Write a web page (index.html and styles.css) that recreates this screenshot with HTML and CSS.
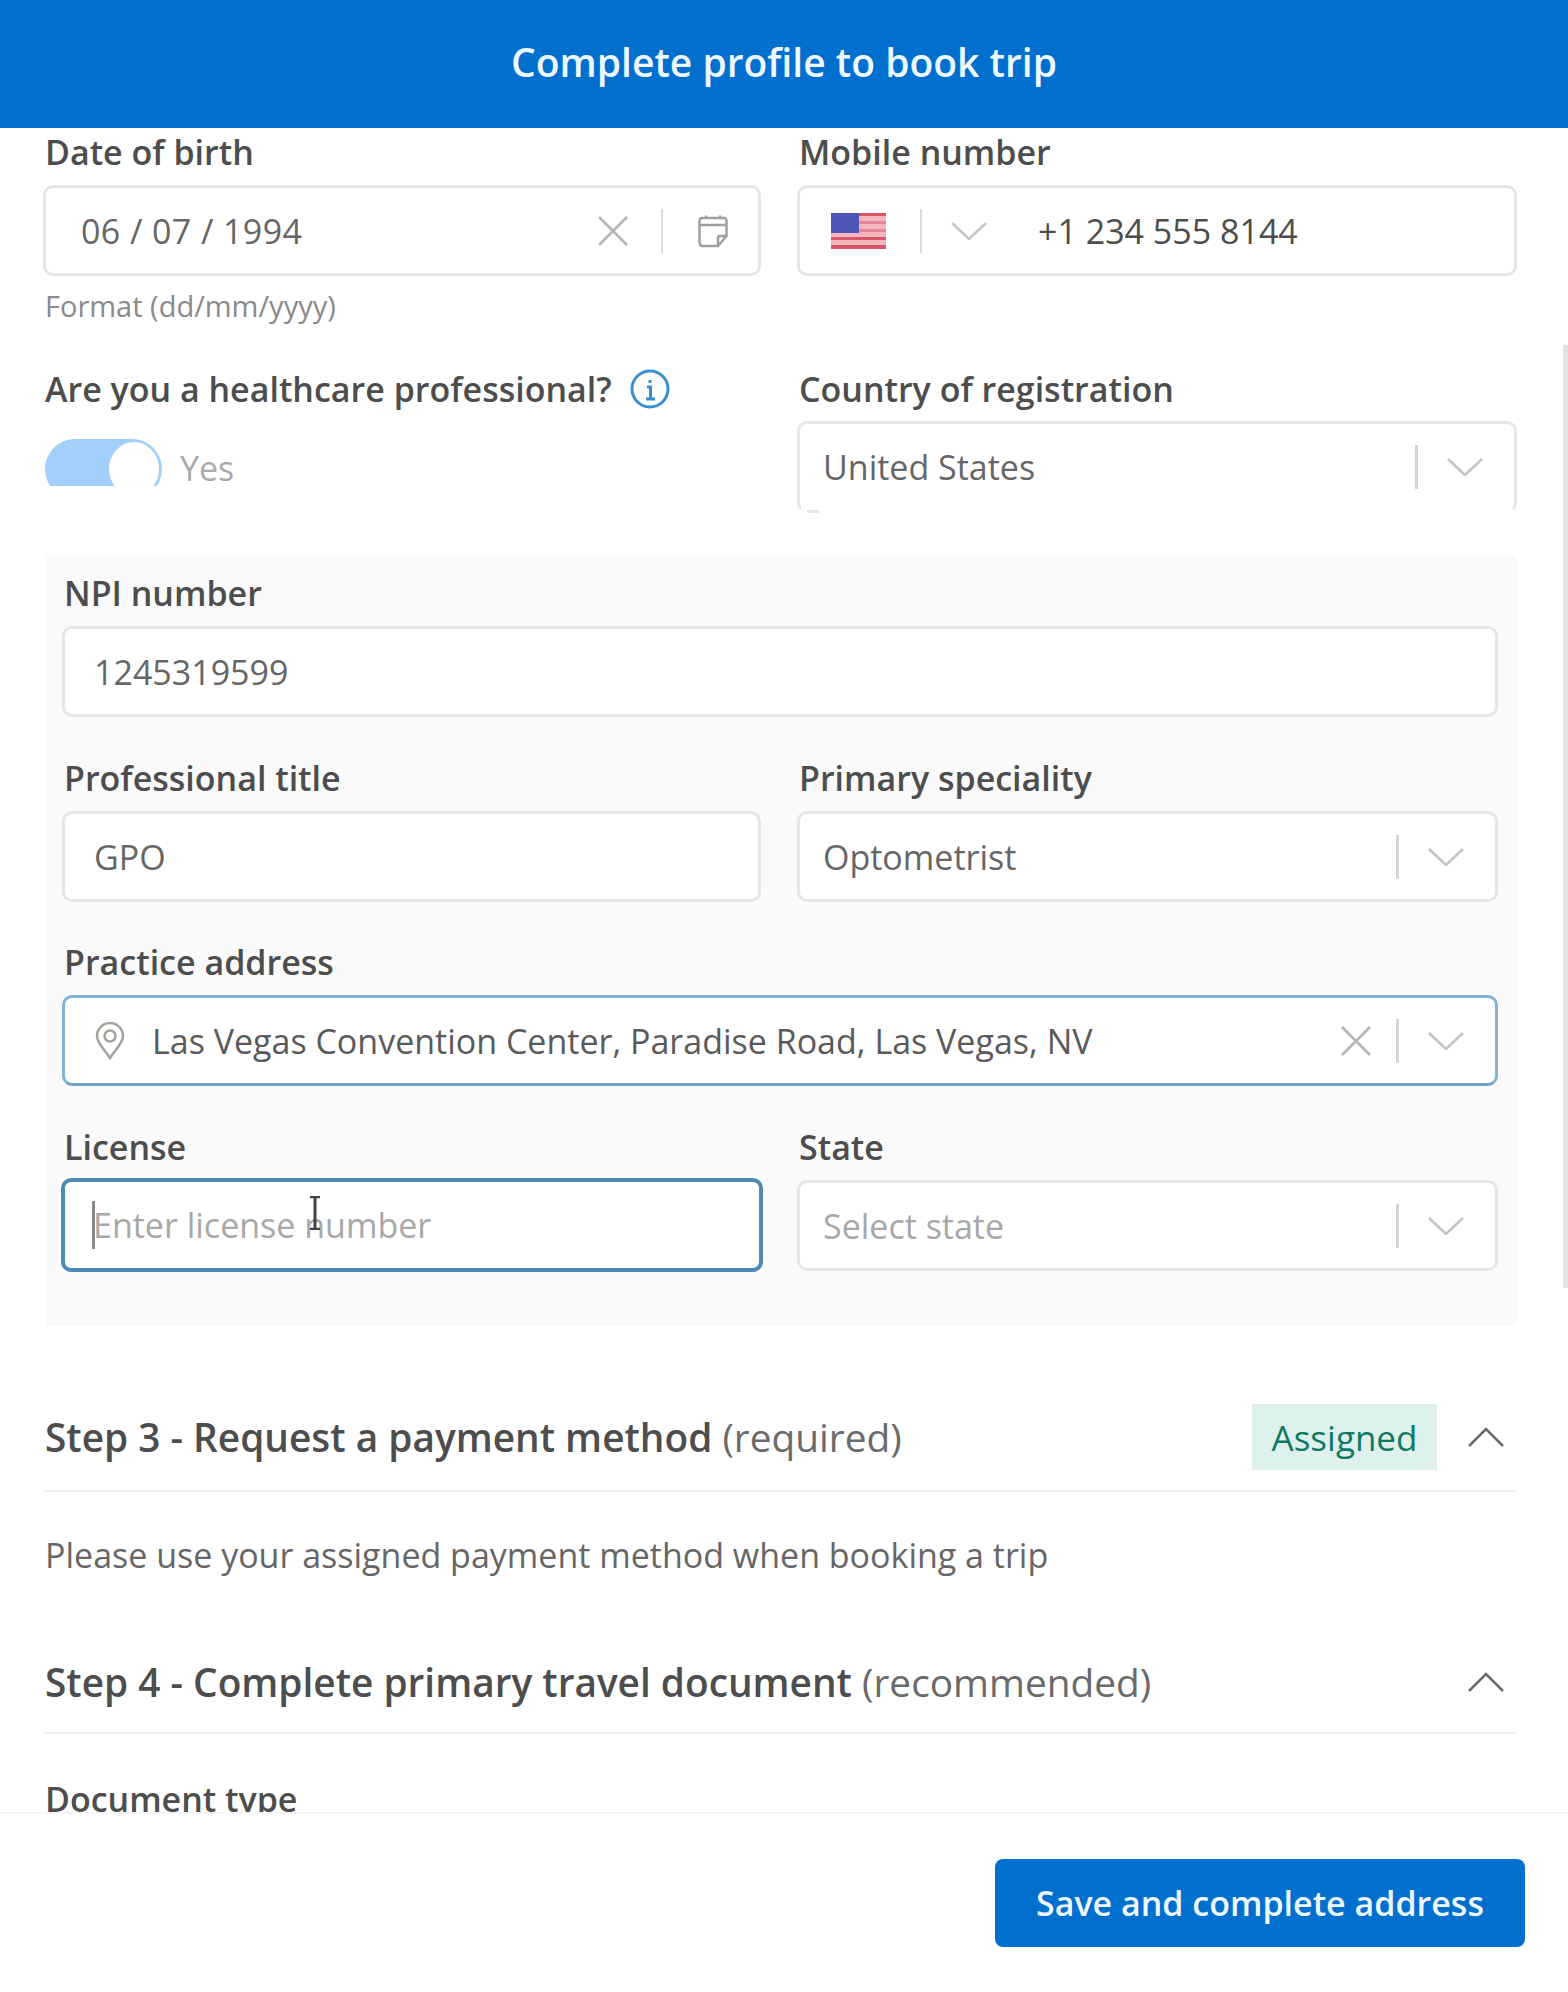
FILE: index.html
```html
<!DOCTYPE html>
<html lang="en">
<head>
  <meta charset="UTF-8" />
  <meta name="viewport" content="width=device-width, initial-scale=1.0"/>
  <title>Complete profile</title>
  <link rel="stylesheet" href="styles.css">
</head>
<body>
  <header class="top-bar">Complete profile to book trip</header>

  <main class="content">
    <div class="scrollbar"></div>

    <div class="row first-row">
      <div class="col">
        <div class="label">Date of birth</div>
        <div class="field">
          <span class="value date-value">06 / 07 / 1994</span>
          <svg class="icon-x" viewBox="0 0 32 32"><path d="M2 2 30 30M30 2 2 30"/></svg>
          <span class="divider"></span>
          <svg class="icon-cal" viewBox="0 0 30 34"><path d="M4 4H26Q28.500 4 28.500 7V22L20 32H5Q1.500 32 1.500 28V7Q1.500 4 4 4ZM1.500 11H28.500M8 1.500V5M22 1.500V5M28 22H22Q20 22 20 24V32"/></svg>
        </div>
        <div class="hint">Format (dd/mm/yyyy)</div>
      </div>
      <div class="col">
        <div class="label">Mobile number</div>
        <div class="field phone-field">
          <svg class="flag" viewBox="0 0 55 36">
            <rect width="55" height="36" fill="#f3b6bd"/>
            <rect y="0" width="55" height="3" fill="#d9566a"/>
            <rect y="8" width="55" height="3" fill="#e58795"/>
            <rect y="16" width="55" height="3" fill="#e58795"/>
            <rect y="24" width="55" height="3" fill="#d9566a"/>
            <rect y="32" width="55" height="4" fill="#d9566a"/>
            <rect width="28" height="20" fill="#4f56b5"/>
          </svg>
          <span class="divider"></span>
          <svg class="chev" viewBox="0 0 36 18"><path d="M1 1 18 17 35 1"/></svg>
          <span class="value phone-value">+1 234 555 8144</span>
        </div>
      </div>
    </div>

    <div class="row second-row">
      <div class="col">
        <div class="label with-info">Are you a healthcare professional?
          <svg class="icon-info" viewBox="0 0 40 40"><circle cx="20" cy="20" r="18"/><path d="M20 11V14M17 18H20.500V30M16 30H25"/></svg>
        </div>
        <div class="toggle-row">
          <div class="toggle"><span class="knob"></span></div>
          <span class="toggle-text">Yes</span>
        </div>
      </div>
      <div class="col">
        <div class="label">Country of registration</div>
        <div class="field select cut-field">
          <span class="value">United States</span>
          <span class="divider"></span>
          <svg class="chev" viewBox="0 0 36 18"><path d="M1 1 18 17 35 1"/></svg>
        </div>
      </div>
    </div>

    <section class="panel">
      <div class="label">NPI number</div>
      <div class="field npi-field"><span class="value">1245319599</span></div>

      <div class="panel-row">
        <div class="col">
          <div class="label">Professional title</div>
          <div class="field npi-field"><span class="value">GPO</span></div>
        </div>
        <div class="col">
          <div class="label">Primary speciality</div>
          <div class="field select">
            <span class="value">Optometrist</span>
            <span class="divider"></span>
            <svg class="chev" viewBox="0 0 36 18"><path d="M1 1 18 17 35 1"/></svg>
          </div>
        </div>
      </div>

      <div class="panel-block">
        <div class="label">Practice address</div>
        <div class="field select address-field">
          <svg class="icon-pin" viewBox="0 0 30 38"><path d="M15 36C9 27 2 21 2 14A13 13 0 0 1 28 14C28 21 21 27 15 36Z"/><circle cx="15" cy="14" r="5.500"/></svg>
          <span class="value">Las Vegas Convention Center, Paradise Road, Las Vegas, NV</span>
          <svg class="icon-x" viewBox="0 0 32 32"><path d="M2 2 30 30M30 2 2 30"/></svg>
          <span class="divider"></span>
          <svg class="chev" viewBox="0 0 36 18"><path d="M1 1 18 17 35 1"/></svg>
        </div>
      </div>

      <div class="panel-row">
        <div class="col">
          <div class="label">License</div>
          <div class="field license-field">
            <span class="caret"></span>
            <span class="placeholder">Enter license number</span>
            <svg class="ibeam" viewBox="0 0 12 38" preserveAspectRatio="none"><path d="M1 1H11M6 1V37M1 37H11"/></svg>
          </div>
        </div>
        <div class="col">
          <div class="label">State</div>
          <div class="field select">
            <span class="placeholder">Select state</span>
            <span class="divider"></span>
            <svg class="chev" viewBox="0 0 36 18"><path d="M1 1 18 17 35 1"/></svg>
          </div>
        </div>
      </div>
    </section>

    <div class="step-head step-three">
      <h2>Step 3 - Request a payment method <span>(required)</span></h2>
      <span class="badge">Assigned</span>
      <svg class="chev-up" viewBox="0 0 36 20"><path d="M1 19 18 2 35 19"/></svg>
    </div>
    <p class="step-text">Please use your assigned payment method when booking a trip</p>

    <div class="step-head step-four">
      <h2>Step 4 - Complete primary travel document <span>(recommended)</span></h2>
      <svg class="chev-up" viewBox="0 0 36 20"><path d="M1 19 18 2 35 19"/></svg>
    </div>
    <div class="label doc-label">Document type</div>
  </main>

  <footer class="bottom-bar">
    <button class="save-btn">Save and complete address</button>
  </footer>
</body>
</html>
```

FILE: styles.css
```css
* {
  margin: 0;
  padding: 0;
  box-sizing: border-box;
}

body {
  font-family: "Open Sans", "Noto Sans", sans-serif;
  background-color: #fff;
  color: #4a4a4a;
  width: 1568px;
  height: 1992px;
  overflow: hidden;
}

.top-bar {
  background-color: #006fcd;
  color: #eef8ff;
  height: 128px;
  display: flex;
  align-items: center;
  justify-content: center;
  font-size: 39px;
  font-weight: 600;
  padding-bottom: 5px;
}

.content {
  position: relative;
  height: 1684px;
  overflow: hidden;
  padding: 2px 51px 0 43px;
}

.scrollbar {
  position: absolute;
  right: 0;
  top: 217px;
  width: 5px;
  height: 943px;
  background-color: #e2e2e2;
}

.row {
  display: grid;
  grid-template-columns: 718px 720px;
  column-gap: 36px;
}

.first-row {
  height: 200px;
}

.second-row {
  margin-top: 37px;
  height: 144px;
}

.second-row .label {
  margin-bottom: 10px;
}

.label {
  font-size: 34px;
  font-weight: 600;
  line-height: 44px;
  color: #4d4d4d;
  margin-bottom: 11px;
  margin-left: 2px;
  white-space: nowrap;
}

.with-info {
  display: flex;
  align-items: center;
  gap: 18px;
}

.field {
  height: 91px;
  background-color: #fff;
  border: 3px solid #e6e6e6;
  border-radius: 10px;
  display: flex;
  align-items: center;
  position: relative;
}

.value {
  font-size: 34px;
  color: #666;
  white-space: nowrap;
  padding-left: 23px;
  flex: 1;
}

.date-value {
  padding-left: 35px;
  letter-spacing: 0.4px;
}

.phone-field {
  padding-left: 31px;
}

.phone-field .value {
  color: #4d4d4d;
  padding-left: 51px;
}

.phone-field .chev {
  margin-left: 29px;
  margin-right: 0;
}

.npi-field .value {
  padding-left: 29px;
}

.flag {
  width: 55px;
  height: 36px;
  margin-right: 34px;
}

.divider {
  width: 2px;
  height: 44px;
  background-color: #dcdcdc;
  flex-shrink: 0;
}

.select .divider {
  width: 3px;
  margin-left: -1px;
  background-color: #d4d4d4;
}

.icon-x {
  width: 32px;
  height: 32px;
  margin-right: 32px;
  flex-shrink: 0;
}

.icon-x path {
  fill: none;
  stroke: #b5b5b5;
  stroke-width: 2.500;
}

.icon-cal {
  width: 30px;
  height: 34px;
  margin: 0 30px 0 35px;
  flex-shrink: 0;
}

.icon-cal path {
  fill: none;
  stroke: #a0a0a0;
  stroke-width: 2.500;
}

.chev {
  width: 36px;
  height: 18px;
  margin: 0 31px 0 29px;
  flex-shrink: 0;
}

.chev path,
.chev-up path {
  fill: none;
  stroke-width: 2.500;
}

.chev path {
  stroke: #c4c4c4;
}

.chev-up path {
  stroke: #6a6a6a;
}

.hint {
  font-size: 29px;
  line-height: 36px;
  color: #8a8a8a;
  margin: 12px 0 0 2px;
  white-space: nowrap;
}

.icon-info {
  width: 40px;
  height: 40px;
}

.icon-info circle,
.icon-info path {
  fill: none;
  stroke: #3a8fd0;
  stroke-width: 3;
}

.toggle-row {
  display: flex;
  align-items: flex-start;
  gap: 18px;
  margin-top: 28px;
  margin-left: 2px;
}

.toggle {
  width: 117px;
  height: 47px;
  overflow: hidden;
  position: relative;
}

.toggle::before {
  content: "";
  display: block;
  width: 117px;
  height: 60px;
  border-radius: 30px;
  background-color: #a3d0fb;
}

.knob {
  position: absolute;
  left: 64px;
  top: 3px;
  width: 50px;
  height: 54px;
  border-radius: 50%;
  background-color: #fff;
}

.toggle-text {
  font-size: 34px;
  color: #aaa;
  line-height: 44px;
  margin-top: 7px;
}

.cut-field {
  height: 92px;
  border-bottom-color: transparent;
}

.cut-field::after {
  content: "";
  position: absolute;
  left: 7px;
  bottom: -3px;
  width: 12px;
  height: 3px;
  background-color: #e6e6e6;
}

.panel {
  background-color: #fafafa;
  margin: 44px 0 0 3px;
  padding: 16px 19px 55px 16px;
}

.panel-row {
  display: grid;
  grid-template-columns: 699px 701px;
  column-gap: 36px;
  margin-top: 39px;
}

.panel-block {
  margin-top: 38px;
}

.panel .label {
  margin-left: 2px;
}

.address-field {
  border: 3px solid #7fb4d6;
  border-bottom-color: #6fa3c6;
}

.address-field .icon-x {
  margin-right: 25px;
}

.icon-pin {
  width: 30px;
  height: 38px;
  margin-left: 30px;
  flex-shrink: 0;
}

.icon-pin path,
.icon-pin circle {
  fill: none;
  stroke: #a6a29c;
  stroke-width: 2.500;
}

.address-field .value {
  padding-left: 27px;
  color: #5a5a5a;
}

.license-field {
  border: 4px solid #4d8ab5;
  height: 94px;
  margin: -2px -2px -1px -1px;
}

.caret {
  width: 3px;
  height: 48px;
  background-color: #888;
  margin-left: 27px;
}

.placeholder {
  font-size: 34px;
  color: #a8a8a8;
  white-space: nowrap;
  flex: 1;
  padding-left: 23px;
}

.license-field .placeholder {
  padding-left: 0;
  margin-left: -2px;
}

.ibeam {
  position: absolute;
  left: 244px;
  top: 14px;
  width: 12px;
  height: 34px;
}

.ibeam path {
  fill: none;
  stroke: #444;
  stroke-width: 3;
}

.step-head {
  display: flex;
  align-items: center;
  min-height: 66px;
  border-bottom: 2px solid #f2f2f2;
  margin: 0 2px 0 2px;
  padding-right: 11px;
  box-sizing: content-box;
}

.step-three {
  margin-top: 78px;
  padding-bottom: 20px;
}

.step-four {
  margin-top: 72px;
  padding-bottom: 17px;
}

.step-head h2 {
  font-size: 38.800px;
  font-weight: 600;
  color: #4d4d4d;
  flex: 1;
  white-space: nowrap;
}

.step-head h2 span {
  font-weight: 400;
  color: #6a6a6a;
}

.badge {
  width: 185px;
  height: 66px;
  background-color: #dff1ec;
  color: #0f7a63;
  font-size: 35px;
  font-weight: 500;
  display: flex;
  align-items: center;
  justify-content: center;
  margin-right: 31px;
}

.chev-up {
  width: 36px;
  height: 20px;
}

.step-text {
  font-size: 34px;
  line-height: 44px;
  color: #666;
  margin: 41px 0 0 2px;
  white-space: nowrap;
}

.doc-label {
  margin-top: 43px;
}

.bottom-bar {
  height: 180px;
  border-top: 2px solid #f5f5f5;
  background-color: #fff;
  display: flex;
  justify-content: flex-end;
  padding: 45px 43px 0 0;
}

.save-btn {
  width: 530px;
  height: 88px;
  background-color: #006fcd;
  color: #eef8ff;
  border: none;
  border-radius: 8px;
  font-family: inherit;
  font-size: 34px;
  font-weight: 600;
}
```
